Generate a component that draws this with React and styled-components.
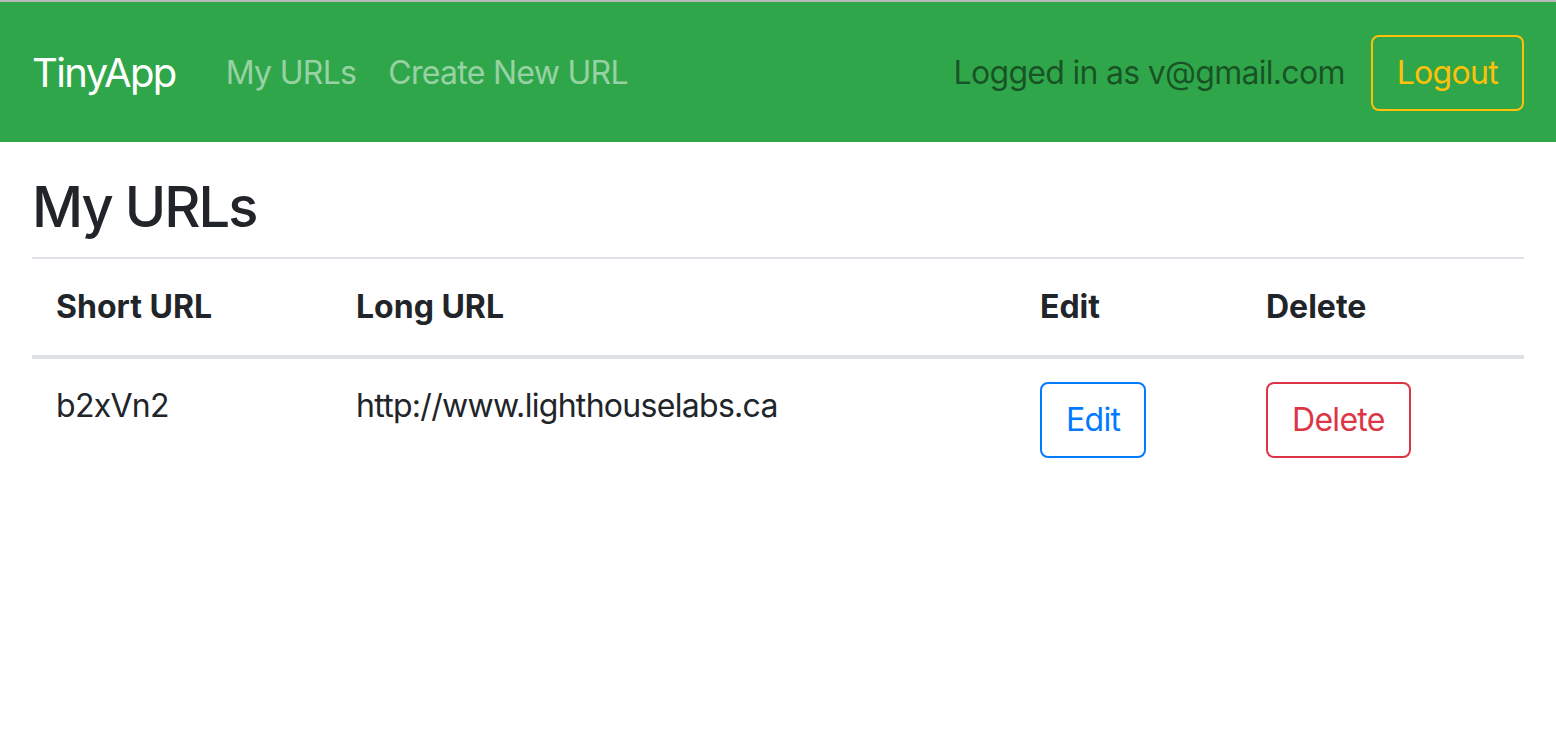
import React from "react";
import styled, { createGlobalStyle } from "styled-components";

const GlobalStyle = createGlobalStyle`
  html, body {
    margin: 0;
    padding: 0;
    background: #fff;
  }
  body {
    font-family: Inter, "Noto Sans", "Liberation Sans", sans-serif;
    font-size: 32px;
    line-height: 1.5;
    letter-spacing: -0.022em;
    color: #212529;
    border-top: 2px solid #b9b9b9;
  }
  * {
    box-sizing: border-box;
  }
`;

const Navbar = styled.nav`
  display: flex;
  align-items: center;
  height: 140px;
  padding: 2px 32px 0;
  background-color: #30a64a;
`;

const Brand = styled.a`
  font-size: 40px;
  color: #fff;
  text-decoration: none;
  margin-right: 34px;
  line-height: 1.5;
  letter-spacing: -0.04em;
`;

const NavLinks = styled.div`
  display: flex;
  flex: 1;
`;

const NavLink = styled.a`
  padding: 0 16px;
  color: rgba(255, 255, 255, 0.5);
  text-decoration: none;
`;

const NavText = styled.span`
  color: rgba(0, 0, 0, 0.5);
  margin-right: 26px;
`;

const OutlineButton = styled.button`
  font-family: inherit;
  font-size: 32px;
  line-height: 1.5;
  letter-spacing: inherit;
  padding: 12px 24px;
  height: 76px;
  background: transparent;
  border: 2px solid ${(p) => p.color};
  color: ${(p) => p.color};
  border-radius: 8px;
  cursor: pointer;
`;

const Main = styled.main`
  padding: 0 32px;
`;

const Title = styled.h3`
  font-size: 56px;
  font-weight: 500;
  line-height: 1.2;
  letter-spacing: -0.035em;
  margin: 32px 0 16px;
`;

const Table = styled.table`
  width: 100%;
  border-collapse: collapse;
  table-layout: fixed;
`;

const Th = styled.th`
  text-align: left;
  font-weight: 700;
  letter-spacing: 0;
  padding: 24px;
  border-top: 2px solid #dee2e6;
  border-bottom: 4px solid #dee2e6;
  vertical-align: bottom;
  width: ${(p) => p.w};
`;

const Td = styled.td`
  padding: 23px 24px 24px;
  vertical-align: top;
`;

export default function App() {
  return (
    <>
      <GlobalStyle />
      <Navbar>
        <Brand href="#">TinyApp</Brand>
        <NavLinks>
          <NavLink href="#">My URLs</NavLink>
          <NavLink href="#">Create New URL</NavLink>
        </NavLinks>
        <NavText>Logged in as v@gmail.com</NavText>
        <OutlineButton color="#ffc107">Logout</OutlineButton>
      </Navbar>
      <Main>
        <Title>My URLs</Title>
        <Table>
          <thead>
            <tr>
              <Th w="300px">Short URL</Th>
              <Th w="684px">Long URL</Th>
              <Th w="226px">Edit</Th>
              <Th>Delete</Th>
            </tr>
          </thead>
          <tbody>
            <tr>
              <Td>b2xVn2</Td>
              <Td>http://www.lighthouselabs.ca</Td>
              <Td>
                <OutlineButton color="#007bff">Edit</OutlineButton>
              </Td>
              <Td>
                <OutlineButton color="#dc3545">Delete</OutlineButton>
              </Td>
            </tr>
          </tbody>
        </Table>
      </Main>
    </>
  );
}
